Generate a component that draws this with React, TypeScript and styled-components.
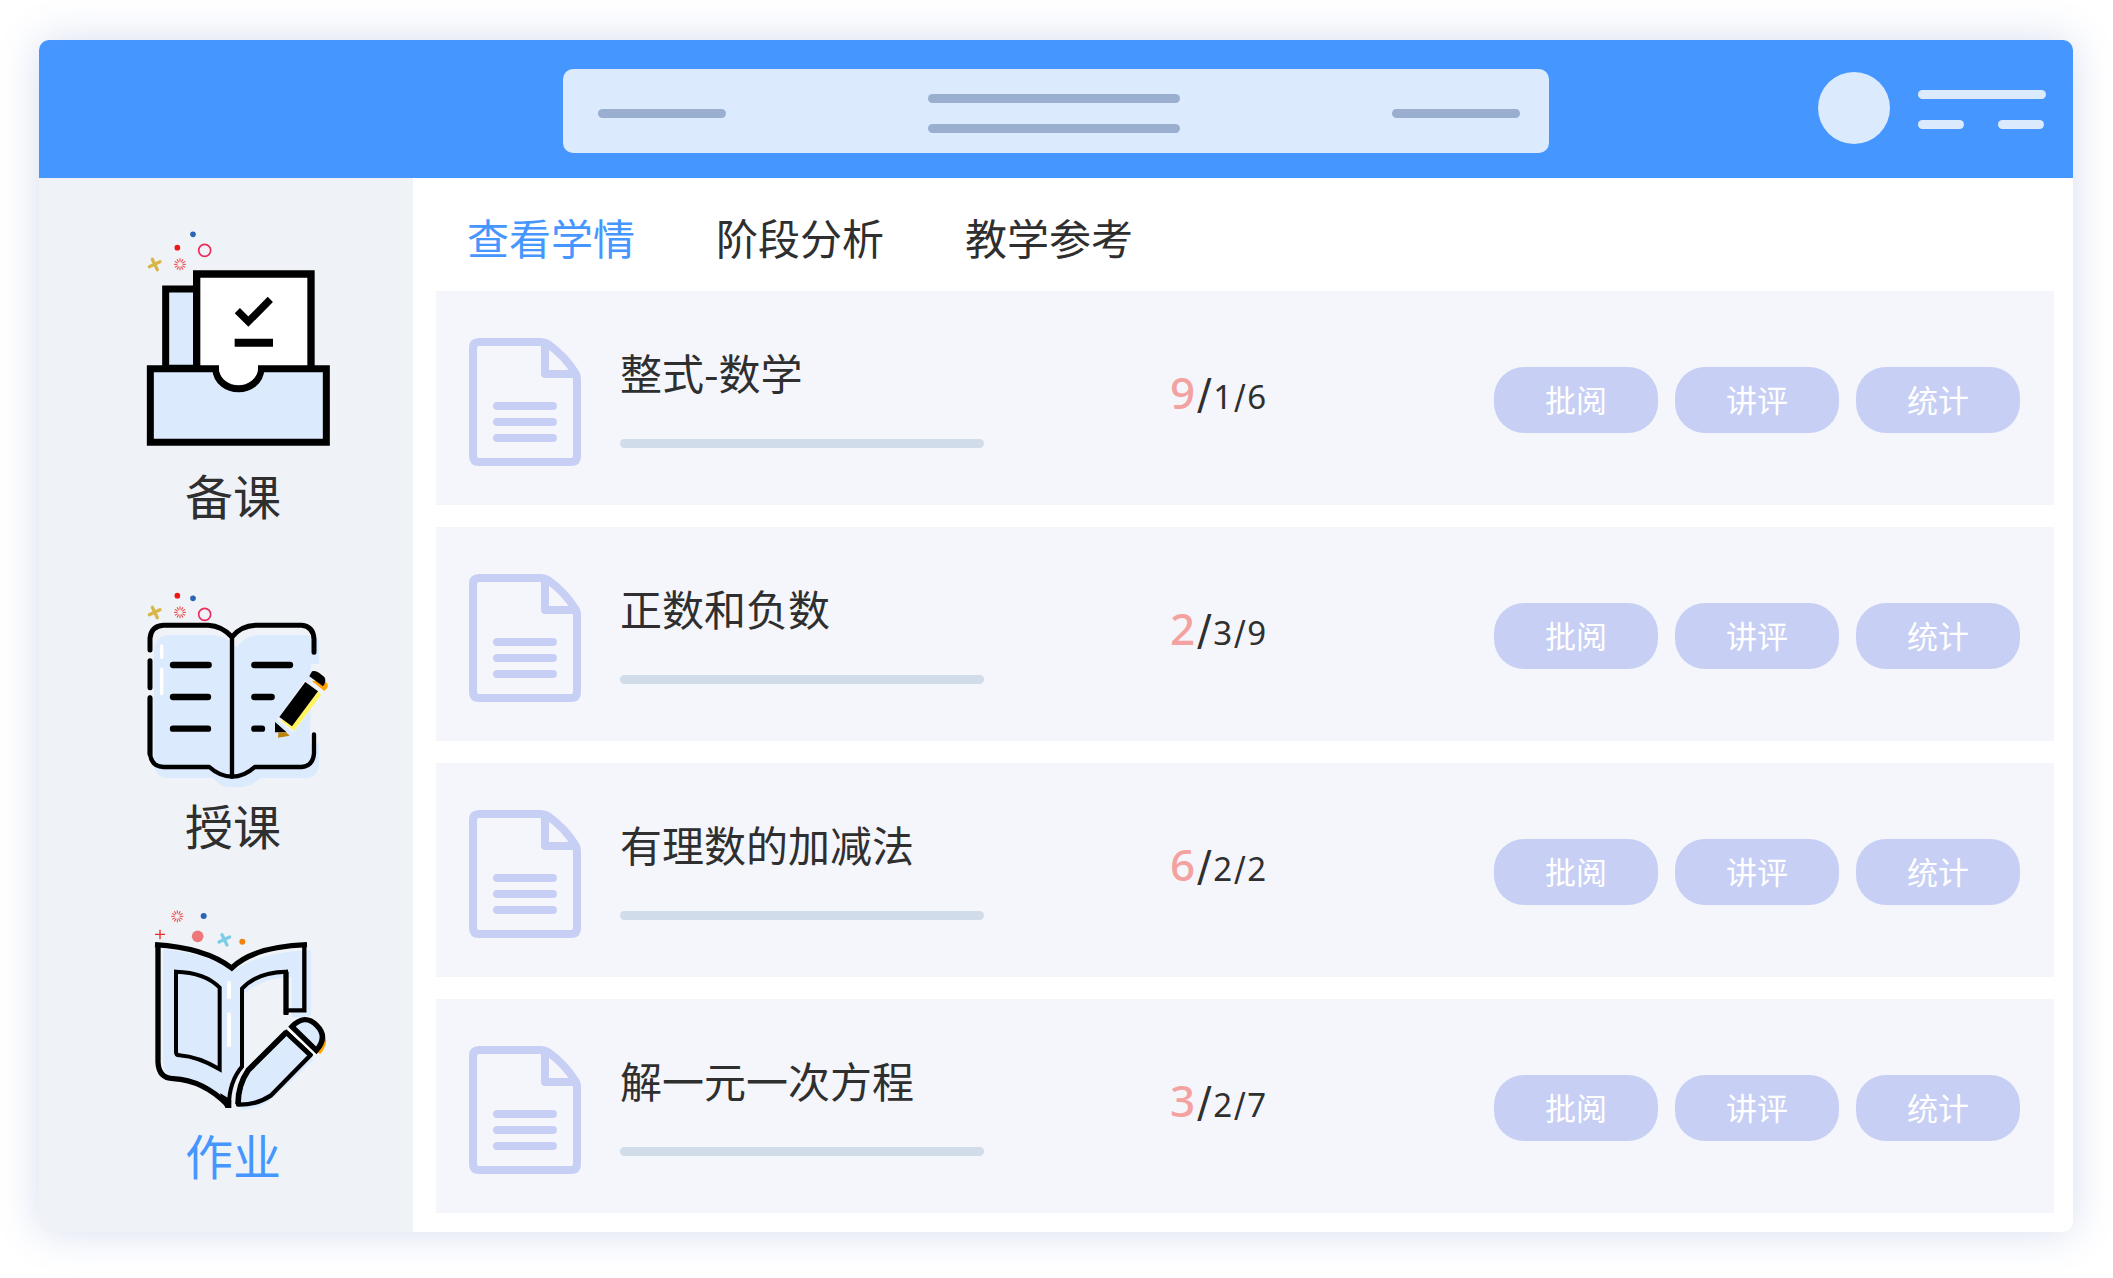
import React from "react";
import styled, { createGlobalStyle } from "styled-components";

const GlobalStyle = createGlobalStyle`
  * { box-sizing: border-box; }
  body {
    margin: 0;
    background: #ffffff;
    color: #2f2f2f;
    font-family: "Noto Sans CJK SC", "Noto Sans", sans-serif;
  }
  button { font: inherit; border: 0; cursor: pointer; }
`;

const Page = styled.div`
  min-height: 100vh;
  padding: 40px 40px 46px 39px;
  display: flex;
`;

const Shell = styled.div`
  flex: 1;
  display: flex;
  flex-direction: column;
  border-radius: 10px;
  background: #ffffff;
  box-shadow: 0 0 40px rgba(70, 100, 180, 0.22);
  overflow: hidden;
`;

const Header = styled.header`
  display: grid;
  grid-template-columns: 1fr minmax(0, 986px) 1fr;
  align-items: center;
  height: 138px;
  padding: 4px 0 0;
  background: #4596ff;
`;

const Banner = styled.div`
  grid-column: 2;
  display: flex;
  align-items: center;
  justify-content: space-between;
  height: 84px;
  padding: 5px 29px 0 35px;
  border-radius: 10px;
  background: #dbeafd;
`;

const Stack = styled.div`
  display: flex;
  flex-direction: column;
  gap: 21px;
`;

const BannerStack = styled(Stack)`
  margin-right: 10px;
`;

const ProfileStack = styled(Stack)`
  padding-top: 3px;
`;

const Line = styled.span<{ $width: number; $color: string }>`
  display: block;
  width: ${(p) => p.$width}px;
  height: 9px;
  border-radius: 5px;
  background: ${(p) => p.$color};
`;

const Profile = styled.div`
  display: flex;
  align-items: center;
  justify-self: end;
  gap: 28px;
  padding: 0 27px 6px 0;
`;

const Avatar = styled.div`
  width: 72px;
  height: 72px;
  border-radius: 50%;
  background: #dbeafd;
`;

const LinePair = styled.div`
  display: flex;
  gap: 34px;
`;

const Body = styled.div`
  flex: 1;
  display: flex;
`;

const Sidebar = styled.nav`
  flex: none;
  width: 374px;
  padding: 52px 0 46px 14px;
  display: flex;
  flex-direction: column;
  align-items: center;
  gap: 34px;
  background: #eff3f8;
`;

const NavItem = styled.a<{ $active?: boolean }>`
  display: flex;
  flex-direction: column;
  align-items: center;
  font-size: 48px;
  line-height: 64px;
  color: ${(p) => (p.$active ? "#4596ff" : "#2f2f2f")};
  text-decoration: none;
`;

const NavArt = styled.svg`
  display: block;
  width: 200px;
  height: 232px;
`;

const Main = styled.main`
  flex: 1;
  min-width: 0;
  padding: 0 19px 19px 23px;
`;

const Tabs = styled.div`
  display: flex;
  align-items: center;
  gap: 81px;
  height: 113px;
  padding: 5px 0 0 31px;
`;

const Tab = styled.button<{ $active?: boolean }>`
  padding: 0;
  background: none;
  font-size: 42px;
  line-height: 54px;
  color: ${(p) => (p.$active ? "#4596ff" : "#2f2f2f")};
`;

const List = styled.ul`
  display: flex;
  flex-direction: column;
  gap: 22px;
  margin: 0;
  padding: 0;
  list-style: none;
`;

const Row = styled.li`
  display: grid;
  grid-template-columns: 112px 403px 1fr auto;
  align-items: center;
  height: 214px;
  padding: 4px 34px 0 33px;
  background: #f4f6fc;
`;

const DocArt = styled.svg`
  display: block;
  width: 112px;
  height: 128px;
  margin-top: 4px;
`;

const Info = styled.div`
  margin: 0 0 7px 39px;
  display: flex;
  flex-direction: column;
  gap: 40px;
`;

const Title = styled.h2`
  margin: 0;
  font-size: 42px;
  line-height: 54px;
  font-weight: 400;
  white-space: nowrap;
`;

const Score = styled.p`
  display: flex;
  align-items: baseline;
  gap: 2px;
  margin: 0 0 10px;
  padding-left: 186px;
  font-family: "Noto Sans", sans-serif;
  font-size: 33px;
  line-height: 60px;
`;

const Slash = styled.span<{ $large?: boolean }>`
  font-family: "DejaVu Sans", sans-serif;
  font-size: ${(p) => (p.$large ? 42 : 33)}px;
`;

const Lead = styled.span`
  font-size: 44px;
  font-weight: 500;
  color: #f4a29f;
`;

const Actions = styled.div`
  display: flex;
  gap: 17px;
`;

const Action = styled.button`
  width: 164px;
  height: 66px;
  padding: 0 0 2px;
  border-radius: 30px;
  background: #c8cff4;
  color: #ffffff;
  font-size: 31px;
  line-height: 44px;
`;

const Burst = ({ x, y }: { x: number; y: number }) => (
  <g transform={`translate(${x} ${y})`} stroke="#ec3a38" fill="none">
    {Array.from({ length: 12 }, (_, i) => (
      <path key={i} d="M0-9V-18" strokeWidth="3" transform={`rotate(${i * 30})`} />
    ))}
    <circle r="8" strokeWidth="1" />
  </g>
);

const Cross = ({ x, y, color }: { x: number; y: number; color: string }) => (
  <path
    transform={`translate(${x} ${y})`}
    d="M-16 7L16-8M-7-15L8 16"
    stroke={color}
    strokeWidth="10"
    strokeLinecap="round"
  />
);

const PrepareArt = () => (
  <NavArt viewBox="9 30 600 696" fill="none" aria-hidden="true">
    <circle cx="189" cy="43" r="8.5" fill="#2866b5" />
    <circle cx="142" cy="83" r="8.5" fill="#ec1a14" />
    <circle cx="224" cy="91" r="18" stroke="#ea2c5c" strokeWidth="5" />
    <Cross x={74} y={133} color="#d9b64a" />
    <Burst x={150} y={133} />
    <path d="M107 445V207H200V445Z" fill="#dbeafd" stroke="#000" strokeWidth="21" />
    <path d="M200 448V162H543V448" fill="#fff" stroke="#000" strokeWidth="22" />
    <path d="M61 446H258C262 525 389 525 393 446H589V667H61Z" fill="#dbeafd" />
    <path d="M257 446H61V667H589V446H393C388 526 263 526 257 446Z" stroke="#000" strokeWidth="21" />
    <path d="M267 430H384V446A58 47 0 0 1 267 446Z" fill="#fff" />
    <path d="M322 272L355 305L421 238" stroke="#000" strokeWidth="22" />
    <path d="M314 368H429" stroke="#000" strokeWidth="24" />
  </NavArt>
);

const TeachArt = () => (
  <NavArt viewBox="9 -60 600 696" fill="none" aria-hidden="true">
    <circle cx="142" cy="47" r="8.5" fill="#ec1a14" />
    <circle cx="189" cy="55" r="8.5" fill="#2866b5" />
    <circle cx="224" cy="103" r="18" stroke="#ea2c5c" strokeWidth="5" />
    <Cross x={74} y={97} color="#d9b64a" />
    <Burst x={150} y={97} />
    <path
      d="M110 165H250Q285 168 306 190L320 201Q345 168 385 165H530Q555 168 567 182V252H543V290L540 490H567V560Q562 590 530 594H390Q370 617 335 621H290Q265 615 250 594H110Q80 590 72 560V205Q80 168 110 165Z"
      fill="#dbeafd"
    />
    <g stroke="#000" strokeLinecap="round" strokeLinejoin="round">
      <path d="M60 210V175Q64 138 100 136H235Q275 138 306 171Q332 138 377 136H515Q550 140 552 177V217" strokeWidth="15" />
      <path d="M60 353V522Q65 560 100 561H238Q270 590 306 590Q342 590 374 561H515Q549 558 552 520V463" strokeWidth="13" />
      <path d="M60 242V323M60 353V522" strokeWidth="15" />
      <path d="M306 171V590" strokeWidth="13" />
    </g>
    <path d="M95 198V232M95 268V341" stroke="#fff" strokeWidth="10" strokeLinecap="round" />
    <path
      d="M129 255H236M129 351H234M129 446H234M373 255H480M373 351H425M373 446H396"
      stroke="#000"
      strokeWidth="19"
      strokeLinecap="round"
      strokeLinejoin="round"
    />
    <path d="M524 300L578 342L490 458L440 420Z" fill="#eff3f8" />
    <path d="M564 334L573 345L492 452L455 424L462 414L486 436Z" fill="#fff35e" />
    <path d="M526 306L564 334L486 439L448 411Z" fill="#000" />
    <path d="M435 426L470 457H435Z" fill="#000" />
    <path d="M445 457H468L479 467L444 473Z" fill="#bd820c" />
    <path d="M545 302L586 305Q597 312 592 323L583 333Z" fill="#ffa200" />
    <path d="M538 289L546 274Q556 270 568 279L583 291Q591 303 579 319Z" fill="#000" />
  </NavArt>
);

const HomeworkArt = () => (
  <NavArt viewBox="9 -30 600 696" fill="none" aria-hidden="true">
    <Burst x={142} y={49} />
    <circle cx="221" cy="48" r="9" fill="#2866b5" />
    <path d="M75 103H105M90 89V118" stroke="#ee2a26" strokeWidth="4" />
    <circle cx="203" cy="109" r="17.5" fill="#ed787a" />
    <Cross x={283} y={119} color="#7dcde4" />
    <circle cx="337" cy="125" r="9" fill="#f08313" />
    <path
      d="M100 148Q235 160 306 215Q390 155 543 150V346Q515 355 485 350V232Q400 232 343 280V500Q305 540 303 622Q210 535 125 533Q98 520 100 480Z"
      fill="#dbeafd"
    />
    <path d="M472 408L550 480L432 592Q390 628 335 630L326 608Q330 555 355 520Z" fill="#dbeafd" />
    <path d="M132 543Q170 544 215 560L210 552Q170 542 135 540Z" fill="#27d3c2" />
    <path d="M297 249V292M297 343V436" stroke="#fff" strokeWidth="12" strokeLinecap="round" />
    <path d="M84 134V486Q86 535 130 536Q220 541 292 614" stroke="#000" strokeWidth="16" />
    <path d="M75 134Q225 143 305 204Q370 140 531 134" stroke="#000" strokeWidth="16" />
    <path d="M523 134V331H468" stroke="#000" strokeWidth="13" />
    <path d="M468 345V215Q380 217 336 266V500Q296 547 297 620" stroke="#000" strokeWidth="12" />
    <path d="M468 215V344" stroke="#000" strokeWidth="16" />
    <path d="M270 579L304 600V624H286Z" fill="#000" />
    <path d="M138 215Q225 217 269 263V508Q205 470 148 466Q138 466 138 456Z" stroke="#000" strokeWidth="12" />
    <path d="M469 397L355 510Q324 555 324 614Q380 615 422 587L542 465Z" fill="#dbeafd" stroke="#000" strokeWidth="13" strokeLinejoin="round" />
    <path d="M469 397L355 510Q324 555 324 612" stroke="#000" strokeWidth="17" />
    <path d="M464 393L544 468" stroke="#000" strokeWidth="15" />
    <path d="M587 412Q594 435 571 462L560 456Z" fill="#ffa200" />
    <path d="M486 380Q524 340 560 376Q595 410 559 451Z" fill="#dbeafd" stroke="#000" strokeWidth="16" />
    <path d="M474 388L556 464" stroke="#fff" strokeWidth="5" />
  </NavArt>
);

const DocIcon = () => (
  <DocArt viewBox="0 0 112 128" fill="none" stroke="#c8cff4" strokeWidth="8" aria-hidden="true">
    <path d="M10 4H72Q76 4 79 6Q96 18 107 36Q108 38 108 41V118Q108 124 102 124H10Q4 124 4 118V10Q4 4 10 4Z" />
    <path d="M76 6V36H106" strokeLinejoin="round" />
    <path d="M28 68H84M28 84H84M28 100H84" strokeLinecap="round" />
  </DocArt>
);

const navigation = [
  { label: "备课", art: <PrepareArt /> },
  { label: "授课", art: <TeachArt /> },
  { label: "作业", art: <HomeworkArt />, active: true },
];

const tabs = ["查看学情", "阶段分析", "教学参考"];

const homework = [
  { title: "整式-数学", score: ["9", "1", "6"] },
  { title: "正数和负数", score: ["2", "3", "9"] },
  { title: "有理数的加减法", score: ["6", "2", "2"] },
  { title: "解一元一次方程", score: ["3", "2", "7"] },
];

const actions = ["批阅", "讲评", "统计"];

export default function App() {
  return (
    <>
      <GlobalStyle />
      <Page>
        <Shell>
          <Header>
            <Banner>
              <Line $width={128} $color="#9aafcf" />
              <BannerStack>
                <Line $width={252} $color="#9aafcf" />
                <Line $width={252} $color="#9aafcf" />
              </BannerStack>
              <Line $width={128} $color="#9aafcf" />
            </Banner>
            <Profile>
              <Avatar />
              <ProfileStack>
                <Line $width={128} $color="#dbeafd" />
                <LinePair>
                  <Line $width={46} $color="#dbeafd" />
                  <Line $width={46} $color="#dbeafd" />
                </LinePair>
              </ProfileStack>
            </Profile>
          </Header>
          <Body>
            <Sidebar>
              {navigation.map((item) => (
                <NavItem key={item.label} href="#" $active={item.active}>
                  {item.art}
                  {item.label}
                </NavItem>
              ))}
            </Sidebar>
            <Main>
              <Tabs role="tablist">
                {tabs.map((tab, i) => (
                  <Tab key={tab} type="button" role="tab" aria-selected={i === 0} $active={i === 0}>
                    {tab}
                  </Tab>
                ))}
              </Tabs>
              <List>
                {homework.map(({ title, score }) => (
                  <Row key={title}>
                    <DocIcon />
                    <Info>
                      <Title>{title}</Title>
                      <Line $width={364} $color="#d0dcea" />
                    </Info>
                    <Score>
                      <Lead>{score[0]}</Lead>
                      <Slash $large>/</Slash>
                      <span>{score[1]}</span>
                      <Slash>/</Slash>
                      <span>{score[2]}</span>
                    </Score>
                    <Actions>
                      {actions.map((action) => (
                        <Action key={action} type="button">
                          {action}
                        </Action>
                      ))}
                    </Actions>
                  </Row>
                ))}
              </List>
            </Main>
          </Body>
        </Shell>
      </Page>
    </>
  );
}
